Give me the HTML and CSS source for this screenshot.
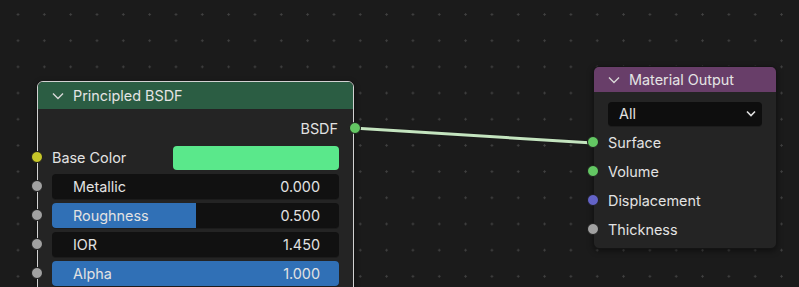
FILE: index.html
```html
<!DOCTYPE html>
<html lang="en">
<head>
    <meta charset="UTF-8">
    <meta name="viewport" content="width=device-width, initial-scale=1.0">
    <link rel="stylesheet" href="styles.css">
</head>
<body>
<div class="canvas">
    <svg class="links" width="799" height="287">
        <line x1="353" y1="128" x2="593" y2="143" stroke="#1a1a1a" stroke-width="5" stroke-linecap="round"/>
        <line x1="353" y1="128" x2="593" y2="143" stroke="#c4e4bf" stroke-width="3" stroke-linecap="round"/>
    </svg>

    <!-- Principled BSDF node -->
    <div class="node node-bsdf selected">
        <div class="node-header header-green">
            <svg class="chevron" width="12" height="8" viewBox="0 0 12 8"><polyline points="1,1.5 6,6.5 11,1.5" fill="none" stroke="#d8d8d8" stroke-width="1.4"/></svg>
            <span>Principled BSDF</span>
        </div>
        <div class="node-body">
            <div class="row row-output">
                <span>BSDF</span>
                <i class="socket socket-out green"></i>
            </div>
            <div class="row">
                <i class="socket socket-in yellow"></i>
                <span class="row-label">Base Color</span>
                <div class="swatch"></div>
            </div>
            <div class="row">
                <i class="socket socket-in grey"></i>
                <div class="field">
                    <div class="field-fill" style="width: 0%"></div>
                    <span class="field-label">Metallic</span>
                    <span class="field-value">0.000</span>
                </div>
            </div>
            <div class="row">
                <i class="socket socket-in grey"></i>
                <div class="field">
                    <div class="field-fill" style="width: 50%"></div>
                    <span class="field-label">Roughness</span>
                    <span class="field-value">0.500</span>
                </div>
            </div>
            <div class="row">
                <i class="socket socket-in grey"></i>
                <div class="field">
                    <span class="field-label">IOR</span>
                    <span class="field-value">1.450</span>
                </div>
            </div>
            <div class="row">
                <i class="socket socket-in grey"></i>
                <div class="field">
                    <div class="field-fill" style="width: 100%"></div>
                    <span class="field-label">Alpha</span>
                    <span class="field-value">1.000</span>
                </div>
            </div>
        </div>
    </div>

    <!-- Material Output node -->
    <div class="node node-output">
        <div class="node-header header-purple">
            <svg class="chevron" width="12" height="8" viewBox="0 0 12 8"><polyline points="1,1.5 6,6.5 11,1.5" fill="none" stroke="#d8d8d8" stroke-width="1.4"/></svg>
            <span>Material Output</span>
        </div>
        <div class="node-body">
            <div class="row">
                <div class="dropdown">
                    <span>All</span>
                    <svg width="10" height="7" viewBox="0 0 10 7"><polyline points="1,1.5 5,5.5 9,1.5" fill="none" stroke="#e0e0e0" stroke-width="1.6"/></svg>
                </div>
            </div>
            <div class="row">
                <i class="socket socket-in green"></i>
                <span class="row-label">Surface</span>
            </div>
            <div class="row">
                <i class="socket socket-in green"></i>
                <span class="row-label">Volume</span>
            </div>
            <div class="row">
                <i class="socket socket-in blue"></i>
                <span class="row-label">Displacement</span>
            </div>
            <div class="row">
                <i class="socket socket-in grey"></i>
                <span class="row-label">Thickness</span>
            </div>
        </div>
    </div>
</div>
</body>
</html>
```

FILE: styles.css
```css
body {
    margin: 0;
    padding: 0;
    font-family: Inter, "DejaVu Sans", sans-serif;
    font-size: 14.4px;
    color: #e2e2e2;
    background-color: #1b1b1b;
}

.canvas {
    position: relative;
    width: 799px;
    height: 287px;
    overflow: hidden;
    background-color: #1b1b1b;
    /* dot grid */
    background-image: radial-gradient(circle, #414141 0.9px, transparent 1.4px);
    background-size: 26.34px 26.2px;
    background-position: 4.85px 1.4px;
}

.links {
    position: absolute;
    top: 0;
    left: 0;
    z-index: 2;
}

.node {
    position: absolute;
    background-color: #242424;
    border-radius: 6px;
    box-sizing: border-box;
    box-shadow: 0 2px 6px rgba(0, 0, 0, 0.45);
}

.node-bsdf {
    left: 37px;
    top: 81px;
    width: 317px;
    height: 240px;
    border: 1px solid #111;
}

.node-bsdf.selected {
    border: 1px solid #d2d2d2;
}

.node-output {
    left: 593px;
    top: 66px;
    width: 184px;
    height: 183px;
    border: 1px solid #141414;
}

.node-header {
    display: flex;
    align-items: center;
    gap: 9px;
    padding-left: 14px;
    border-radius: 5px 5px 0 0;
    color: #e4e4e4;
}

.header-green {
    height: 27px;
    background-color: #2b5d43;
}

.header-purple {
    height: 25px;
    background-color: #683e69;
}

.chevron {
    margin-top: 1px;
}

.node-body {
    display: flex;
    flex-direction: column;
    padding: 5px 14px 0 14px;
}

.node-output .node-body {
    padding-top: 7px;
}

.row {
    position: relative;
    height: 29px;
    display: flex;
    align-items: center;
}

.row-output {
    justify-content: flex-end;
    padding-right: 1px;
}

.row-label {
    flex: 1;
}

.socket {
    position: absolute;
    top: 50%;
    width: 10px;
    height: 10px;
    margin-top: -6.5px;
    border-radius: 50%;
    border: 1.5px solid #1c1c1c;
    z-index: 3;
}

.socket-in {
    left: -21.5px;
}

.socket-out {
    right: -21.5px;
}

.green { background-color: #63c763; }
.yellow { background-color: #c7c729; }
.grey { background-color: #a1a1a1; }
.blue { background-color: #6363c7; }

.swatch {
    width: 166px;
    height: 24px;
    border-radius: 4px;
    background-color: #5ae88b;
}

.field {
    position: relative;
    flex: 1;
    height: 25px;
    display: flex;
    align-items: center;
    justify-content: space-between;
    padding: 0 19px 0 21px;
    border-radius: 4px;
    background-color: #111;
    box-shadow: 0 1px 0 #1c1c1c;
    overflow: hidden;
}

.field-fill {
    position: absolute;
    top: 0;
    left: 0;
    bottom: 0;
    background-color: #3070b6;
}

.field-label,
.field-value {
    position: relative;
}

.dropdown {
    flex: 1;
    height: 24px;
    display: flex;
    align-items: center;
    justify-content: space-between;
    padding: 0 6px 0 11px;
    border-radius: 4px;
    background-color: #0e0e0e;
    box-shadow: 0 1px 0 #1c1c1c;
}
```
